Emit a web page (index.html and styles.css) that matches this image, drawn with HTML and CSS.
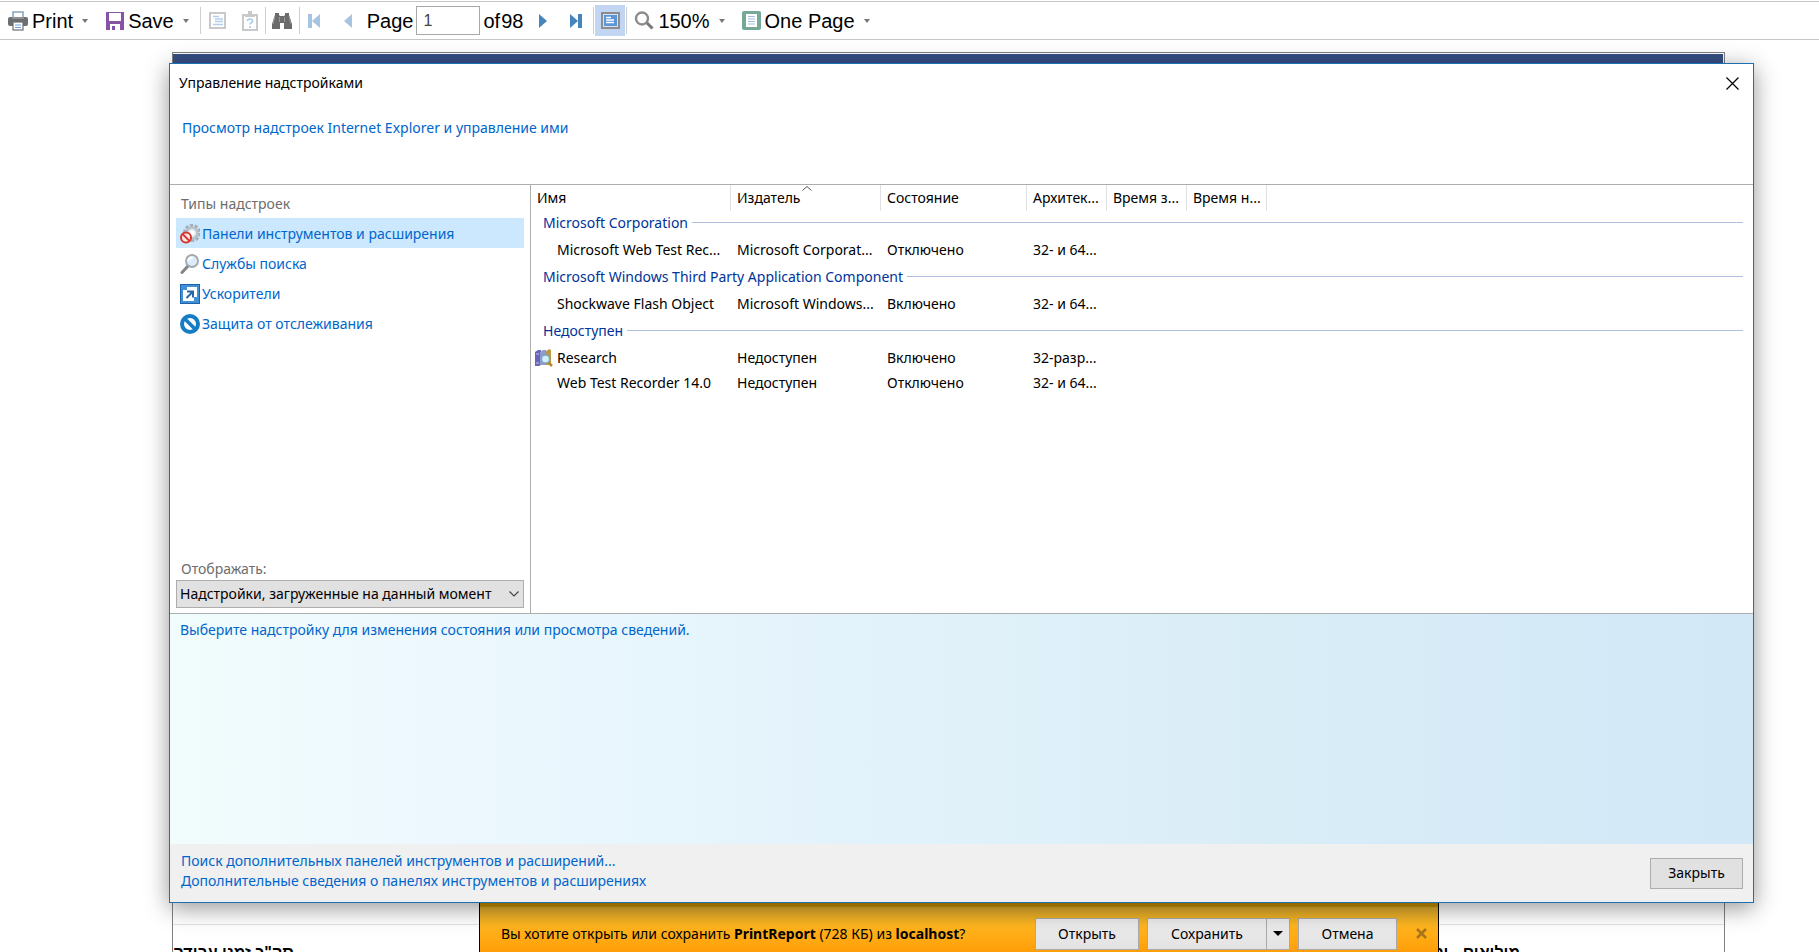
FILE: index.html
```html
<!DOCTYPE html>
<html lang="ru">
<head>
  <meta charset="UTF-8">
  <title>Управление надстройками</title>
  <meta name="viewport" content="width=device-width, initial-scale=1">
  <link rel="stylesheet" href="styles.css">
</head>
<body>
  <div class="toolbar">
    <button class="tool print">
      <svg width="20" height="20" viewBox="0 0 20 20"><rect x="5" y="1" width="10" height="6" fill="#fff" stroke="#7d9db8" stroke-width="1.4"/><path d="M2 6h16q2 0 2 2v5q0 2-2 2H2q-2 0-2-2V8q0-2 2-2z" fill="#6d6e70"/><path d="M4 6h12v2H4z" fill="#8f9092"/><rect x="5" y="11" width="10" height="8" fill="#fff" stroke="#6d6e70" stroke-width="1.2"/><path d="M7 14h6M7 16.500h6" stroke="#6fa3dc" stroke-width="1.200"/></svg>
      <span>Print</span><i class="caret"></i>
    </button>
    <button class="tool save">
      <svg width="18" height="18" viewBox="0 0 18 18"><path d="M0 0h18v18H0z" fill="#8653a5"/><path d="M3 1h12v8H3zM4 12h10v6H4z" fill="#fff"/><path d="M6 14h3v4H6z" fill="#8653a5"/></svg>
      <span>Save</span><i class="caret"></i>
    </button>
    <i class="sep"></i>
    <button class="tool map" aria-label="Document map">
      <svg width="17" height="17" viewBox="0 0 17 17"><rect x="1" y="1" width="15" height="15" fill="#fff" stroke="#c9c9c9" stroke-width="2"/><path d="M4 4.500h6M6 7h8M6 9.500h8M4 12.500h10" stroke="#b4cde8" stroke-width="1.300"/></svg>
    </button>
    <button class="tool params" aria-label="Parameters">
      <svg width="16" height="20" viewBox="0 0 16 20"><rect x="1" y="4" width="14" height="15" fill="#fff" stroke="#c9c9c9" stroke-width="2"/><path d="M3 3h3V0h4v3h3v3H3z" fill="#c9c9c9"/><path d="M5.500 10q0-2 2.500-2t2.500 2q0 1.200-1.500 2-1 .6-1 1.500M8 15v2" fill="none" stroke="#a9c8ea" stroke-width="1.600"/></svg>
    </button>
    <i class="sep"></i>
    <button class="tool find" aria-label="Find">
      <svg width="20" height="17" viewBox="0 0 20 17"><path d="M3 3V1h4v2l1 1h4l1-1V1h4v2l3 9v5h-8v-6H8v6H0v-5z" fill="#6b6b6b"/><path d="M3 4l-2 8M17 4l2 8M7.500 5v5M12.500 5v5" stroke="#989898"/></svg>
    </button>
    <i class="sep"></i>
    <button class="tool first" aria-label="First page">
      <svg width="13" height="14" viewBox="0 0 13 14"><path d="M0 0h4v14H0zM12 0v14L4 7z" fill="#a6c3e1"/></svg>
    </button>
    <button class="tool prev" aria-label="Previous page">
      <svg width="8" height="14" viewBox="0 0 8 14"><path d="M8 0v14L0 7z" fill="#a6c3e1"/></svg>
    </button>
    <label class="page-label" for="page">Page</label>
    <input class="page-input" id="page" type="text" value="1">
    <span class="page-count"><span>of</span><span>98</span></span>
    <button class="tool next" aria-label="Next page">
      <svg width="8" height="14" viewBox="0 0 8 14"><path d="M0 0v14l8-7z" fill="#4684bd"/></svg>
    </button>
    <button class="tool last" aria-label="Last page">
      <svg width="12" height="14" viewBox="0 0 12 14"><path d="M8 0h4v14H8zM0 0v14l8-7z" fill="#4684bd"/></svg>
    </button>
    <i class="sep"></i>
    <button class="tool preview" aria-label="Print preview">
      <svg width="19" height="17" viewBox="0 0 19 17"><rect x="1" y="1" width="17" height="15" fill="#d6e4f4" stroke="#8c8c8c" stroke-width="2"/><path d="M3 3h13v11H3z" fill="#5b95da"/><path d="M5 5.500h5M5 8h8M5 10.500h8" stroke="#fff" stroke-width="1.400"/></svg>
    </button>
    <i class="sep"></i>
    <button class="tool zoom">
      <svg width="20" height="19" viewBox="0 0 20 19"><path d="M12 11l6.500 6.500" stroke="#777" stroke-width="3"/><circle cx="8" cy="7.500" r="6" fill="#fff" stroke="#8b8b8b" stroke-width="2.400"/></svg>
      <span>150%</span><i class="caret"></i>
    </button>
    <button class="tool view">
      <svg width="19" height="19" viewBox="0 0 19 19"><rect width="19" height="19" rx="2" fill="#76a896"/><path d="M4 3h11v13H4z" fill="#fff"/><path d="M6 5.500h7M6 8h7M6 10.500h7M6 13h7" stroke="#9fc0de"/></svg>
      <span>One Page</span><i class="caret"></i>
    </button>
  </div>

  <div class="report">
    <div class="banner"></div>
    <div class="report-row">
      <span dir="rtl">סה"כ זמני עבודה</span>
      <span class="report-total" dir="rtl">מילואים - ימים</span>
    </div>
  </div>

  <div class="download-bar">
    <p>Вы хотите открыть или сохранить <b>PrintReport</b> (728 КБ) из <b>localhost</b>?</p>
    <button class="bar-button open">Открыть</button>
    <div class="split">
      <button class="bar-button store">Сохранить</button>
      <button class="bar-button more" aria-label="Другие варианты"><svg width="10" height="5" viewBox="0 0 10 5"><path d="M0 0h10L5 5z"/></svg></button>
    </div>
    <button class="bar-button cancel">Отмена</button>
    <button class="dismiss" aria-label="Скрыть"><svg width="11" height="11" viewBox="0 0 11 11"><path d="M1 1l9 9M10 1l-9 9" stroke="#a8751c" stroke-width="2.500"/></svg></button>
  </div>

  <div class="dialog" role="dialog" aria-labelledby="title">
    <div class="dialog-head">
      <div class="title-bar">
        <span id="title">Управление надстройками</span>
        <button class="close-x" aria-label="Закрыть окно"><svg width="13" height="13" viewBox="0 0 13 13"><path d="M.5.5l12 12M12.500.5l-12 12" stroke="#000" stroke-width="1.200"/></svg></button>
      </div>
      <a class="intro" href="#">Просмотр надстроек Internet Explorer и управление ими</a>
    </div>

    <div class="panes">
      <div class="sidebar">
        <div class="caption">Типы надстроек</div>
        <a class="type selected" href="#">
          <svg width="20" height="20" viewBox="0 0 20 20"><circle cx="12" cy="9" r="7" fill="none" stroke="#a3afb9" stroke-width="4" stroke-dasharray="3 1.400"/><circle cx="12" cy="9" r="5.500" fill="#dfe8ef" stroke="#b5c0c9" stroke-width="2.500"/><circle cx="12" cy="9" r="2.500" fill="#fff"/><circle cx="6" cy="13.500" r="5" fill="#fbe9e7" stroke="#d8372f" stroke-width="2"/><path d="M2.500 10l7 7" stroke="#d8372f" stroke-width="2"/></svg>
          <span>Панели инструментов и расширения</span>
        </a>
        <a class="type" href="#">
          <svg width="20" height="20" viewBox="0 0 20 20"><path d="M8 12l-6 6.500" stroke="#858585" stroke-width="3" stroke-linecap="round"/><circle cx="12" cy="7" r="6" fill="#dcecfb" stroke="#a3a8ad" stroke-width="1.800"/><path d="M8.500 7q0-3.500 4-3.500" stroke="#fff" stroke-width="2" fill="none"/></svg>
          <span>Службы поиска</span>
        </a>
        <a class="type" href="#">
          <svg width="20" height="20" viewBox="0 0 20 20"><rect x=".5" y=".5" width="19" height="19" fill="#418fd4" stroke="#1f62ac"/><path d="M7 3h10v10h-3v4H3V6h4z" fill="#fff"/><path d="M6.500 14l6-6M7 7.500h6v6" fill="none" stroke="#2764a9" stroke-width="2"/></svg>
          <span>Ускорители</span>
        </a>
        <a class="type" href="#">
          <svg width="20" height="20" viewBox="0 0 20 20"><circle cx="10" cy="10" r="8" fill="#fff" stroke="#167dc5" stroke-width="4"/><path d="M4.500 4.500l11 11" stroke="#167dc5" stroke-width="3.500"/></svg>
          <span>Защита от отслеживания</span>
        </a>
        <label class="caption show-label" for="show">Отображать:</label>
        <div class="select-box">
          <select id="show"><option>Надстройки, загруженные на данный момент</option></select>
          <svg width="10" height="6" viewBox="0 0 10 6"><path d="M.5.5L5 5 9.500.5" fill="none" stroke="#444" stroke-width="1.200"/></svg>
        </div>
      </div>

      <div class="list">
        <table>
          <colgroup><col class="c-name"><col class="c-publisher"><col class="c-state"><col class="c-small"><col class="c-small"><col class="c-small"><col></colgroup>
          <thead>
            <tr>
              <th><div>Имя</div></th>
              <th class="sorted"><div>Издатель</div><svg width="10" height="5" viewBox="0 0 10 5"><path d="M.5 4.500L5 .5l4.500 4" fill="none" stroke="#555"/></svg></th>
              <th><div>Состояние</div></th>
              <th><div>Архитек...</div></th>
              <th><div>Время з...</div></th>
              <th><div>Время н...</div></th>
              <td></td>
            </tr>
          </thead>
          <tbody>
            <tr class="group"><td colspan="7"><div>Microsoft Corporation</div></td></tr>
            <tr><td class="name">Microsoft Web Test Rec...</td><td>Microsoft Corporat...</td><td>Отключено</td><td>32- и 64...</td><td></td><td></td><td></td></tr>
            <tr class="group"><td colspan="7"><div>Microsoft Windows Third Party Application Component</div></td></tr>
            <tr><td class="name">Shockwave Flash Object</td><td>Microsoft Windows...</td><td>Включено</td><td>32- и 64...</td><td></td><td></td><td></td></tr>
            <tr class="group"><td colspan="7"><div>Недоступен</div></td></tr>
            <tr>
              <td class="name with-icon"><div><svg width="18" height="18" viewBox="0 0 18 18"><path d="M0 3l3-2h3v15l-2 1H0z" fill="#6a64b8"/><path d="M1 5h3M1 14h3" stroke="#c5c2ee"/><path d="M5 3l3-2h3v15H5z" fill="#8f9bd0"/><path d="M10 3l4-3 2 1v15h-6z" fill="#b89a4a"/><path d="M13 13l4 4" stroke="#b58a2c" stroke-width="2.500"/><circle cx="10.500" cy="10" r="4" fill="#d2f0fb" stroke="#7ea5bf" stroke-width="1.300"/></svg>Research</div></td>
              <td>Недоступен</td><td>Включено</td><td>32-разр...</td><td></td><td></td><td></td>
            </tr>
            <tr><td class="name">Web Test Recorder 14.0</td><td>Недоступен</td><td>Отключено</td><td>32- и 64...</td><td></td><td></td><td></td></tr>
          </tbody>
        </table>
      </div>
    </div>

    <div class="details">Выберите надстройку для изменения состояния или просмотра сведений.</div>

    <div class="dialog-foot">
      <div class="links">
        <a href="#">Поиск дополнительных панелей инструментов и расширений...</a>
        <a href="#">Дополнительные сведения о панелях инструментов и расширениях</a>
      </div>
      <button class="close">Закрыть</button>
    </div>
  </div>
</body>
</html>
```
FILE: styles.css
```css
* {
  box-sizing: border-box;
}
body {
  display: flex;
  flex-direction: column;
  height: 100vh;
  margin: 0;
  overflow: hidden;
  background: #fff;
  color: #000;
  font-family: "Noto Sans", "Open Sans", sans-serif;
  font-size: 14px;
  line-height: 20px;
}
a {
  color: #0066cc;
  text-decoration: none;
}
button, input, select {
  font: inherit;
  color: inherit;
}
button {
  padding: 0;
}
svg {
  display: block;
  flex: none;
}

/* report viewer toolbar */
.toolbar {
  display: flex;
  align-items: center;
  flex: none;
  height: 39px;
  margin-top: 1px;
  padding-left: 8px;
  border-top: 1px solid #c6c6c6;
  border-bottom: 1px solid #c6c6c6;
  font-family: "Liberation Sans", Arial, sans-serif;
  font-size: 20px;
}
.tool {
  display: flex;
  align-items: center;
  justify-content: center;
  flex: none;
  border: 0;
  background: none;
  white-space: nowrap;
}
.tool span {
  margin-left: 4px;
}
.caret {
  margin-left: 9px;
  border: 3px solid transparent;
  border-top: 4px solid #777;
  border-bottom: 0;
}
.sep {
  flex: none;
  width: 1px;
  height: 27px;
  background: #cfcfcf;
}
.save {
  margin: 0 11px 0 18px;
}
.map {
  width: 33px;
  margin-right: 2px;
}
.params {
  width: 29px;
}
.find {
  width: 33px;
}
.first {
  width: 30px;
}
.prev {
  width: 37px;
}
.page-input {
  width: 64px;
  height: 29px;
  margin: 0 3px;
  padding: 0 6px;
  border: 1px solid #a9a9a9;
  color: #444;
  font-size: 16px;
}
.page-count {
  display: flex;
  gap: 1px;
}
.next {
  width: 40px;
}
.last {
  width: 26px;
  margin-right: 4px;
}
.preview {
  width: 30px;
  height: 31px;
  margin: 0 1px;
  background: #c2d5f2;
}
.zoom {
  margin: 0 17px 0 7px;
}

/* report page under the windows */
.report {
  display: flex;
  flex-direction: column;
  flex: 1;
  margin: 12px 94px 0 172px;
  border: 1px solid #808080;
  border-bottom: 0;
}
.banner {
  height: 80px;
  margin: 1px 1px 0 0;
  background: #364f85;
}
.report-row {
  display: flex;
  justify-content: space-between;
  height: 28px;
  margin-top: auto;
  padding-top: 18px;
  border-top: 1px solid #e2e2e2;
  font-family: "Liberation Sans", Arial, sans-serif;
  font-size: 16px;
  font-weight: bold;
}
.report-total {
  margin-right: 204px;
}

.download-bar {
  position: absolute;
  right: 380px;
  bottom: 0;
  left: 479px;
  display: flex;
  align-items: center;
  height: 50px;
  padding: 13px 7px 0 21px;
  border: 1px solid #000;
  border-width: 0 1px;
  background: linear-gradient(#c99300 5px, #e0ae2c 5px, #ffb41e 25px, #ff9e08);
}
.download-bar p {
  flex: 1;
  margin: 0;
  white-space: nowrap;
}
.bar-button {
  height: 32px;
  margin-right: 8px;
  border: 1px solid #a9a9a9;
  background: linear-gradient(#ececec, #e3e3e3);
}
.open {
  width: 104px;
}
.split {
  display: flex;
  margin-right: 8px;
}
.split .bar-button {
  margin-right: 0;
}
.store {
  width: 120px;
}
.more {
  display: flex;
  align-items: center;
  justify-content: center;
  width: 24px;
  margin-left: -1px;
}
.cancel {
  width: 99px;
}
.dismiss {
  display: flex;
  justify-content: center;
  width: 20px;
  margin-left: 6px;
  border: 0;
  background: none;
}

/* add-ons window */
.dialog {
  position: absolute;
  top: 63px;
  right: 65px;
  bottom: 49px;
  left: 169px;
  display: flex;
  flex-direction: column;
  border: 1px solid #1c6fb3;
  background: #fff;
  box-shadow: 0 5px 22px rgba(0, 0, 0, 0.42);
}
.dialog-head {
  height: 121px;
  padding: 9px 14px 0 9px;
  border-bottom: 1px solid #adadad;
}
.title-bar {
  display: flex;
  align-items: center;
  justify-content: space-between;
}
.close-x {
  border: 0;
  background: none;
}
.intro {
  display: block;
  margin: 25px 0 0 3px;
}
.panes {
  display: flex;
  min-height: 429px;
  border-bottom: 1px solid #adadad;
}
.sidebar {
  display: flex;
  flex-direction: column;
  width: 361px;
  padding: 9px 6px 5px;
  border-right: 1px solid #adadad;
}
.caption {
  padding-left: 5px;
  color: #6d6d6d;
}
.caption + .type {
  margin-top: 4px;
}
.type {
  display: flex;
  align-items: center;
  height: 30px;
  padding: 2px 0 0 4px;
}
.type span {
  margin-left: 2px;
}
.selected {
  background: #cce8ff;
}
.show-label {
  margin-top: auto;
}
.select-box {
  position: relative;
  margin-top: 1px;
}
.select-box select {
  display: block;
  width: 100%;
  height: 28px;
  padding: 0 20px 0 3px;
  border: 1px solid #adadad;
  border-radius: 0;
  background: #e1e1e1;
  appearance: none;
}
.select-box svg {
  position: absolute;
  top: 11px;
  right: 5px;
}
.list {
  flex: 1;
}
table {
  width: 100%;
  border-collapse: collapse;
  table-layout: fixed;
}
.c-name {
  width: 200px;
}
.c-publisher {
  width: 150px;
}
.c-state {
  width: 146px;
}
.c-small {
  width: 80px;
}
th, td {
  height: 25px;
  padding: 0 0 2px 6px;
  text-align: left;
  white-space: nowrap;
}
th, thead td {
  position: relative;
  height: 24px;
  padding: 0;
  font-weight: normal;
}
th div {
  height: 26px;
  margin-bottom: -2px;
  padding: 3px 0 0 6px;
  border-right: 1px solid #e0e0e0;
}
.sorted svg {
  position: absolute;
  top: 1px;
  left: 71px;
}
td.name {
  padding-left: 26px;
}
td.with-icon {
  padding-left: 4px;
}
.with-icon div {
  display: flex;
  align-items: center;
  gap: 4px;
}
.group td {
  height: 29px;
  padding: 0 10px 2px 12px;
  color: #003399;
}
.group div {
  display: flex;
  align-items: center;
  gap: 4px;
}
.group div::after {
  content: "";
  flex: 1;
  height: 1px;
  background: #aebfdd;
}
.details {
  flex: 1;
  padding: 6px 10px;
  background: linear-gradient(90deg, #f1fcfc, #ecf8fe 18%, #d9edf7 70%, #d2e8f7);
  color: #0066cc;
}
.dialog-foot {
  display: flex;
  align-items: center;
  justify-content: space-between;
  height: 58px;
  padding: 0 10px 0 11px;
  background: #f0f0f0;
}
.links {
  padding-bottom: 4px;
}
.links a {
  display: block;
}
.close {
  width: 93px;
  height: 31px;
  border: 1px solid #adadad;
  background: #e1e1e1;
}
```
